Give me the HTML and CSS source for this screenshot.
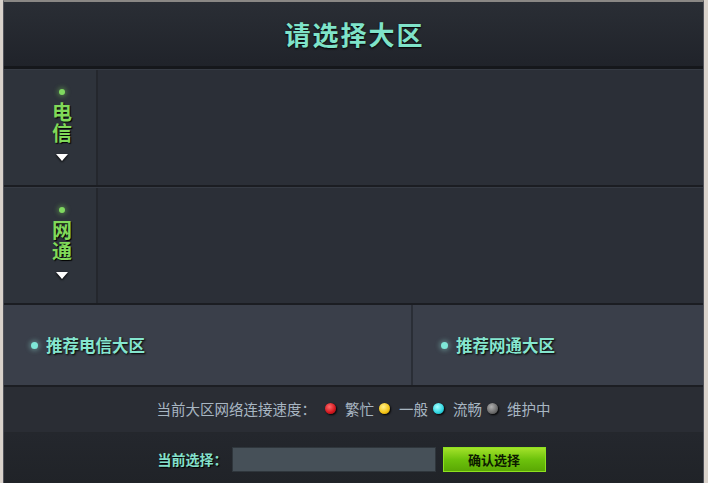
FILE: index.html
```html
<!DOCTYPE html>
<html lang="zh">
<head>
<meta charset="utf-8">
<link rel="stylesheet" href="styles.css">
</head>
<body>
<div class="panel">
  <header class="head"><h1 class="title">请选择大区</h1></header>
  <section class="isp">
    <div class="isp-side">
      <span class="gdot"></span>
      <span class="isp-name">电信</span>
      <span class="tri"></span>
    </div>
    <div class="isp-body"></div>
  </section>
  <section class="isp">
    <div class="isp-side">
      <span class="gdot"></span>
      <span class="isp-name">网通</span>
      <span class="tri"></span>
    </div>
    <div class="isp-body"></div>
  </section>
  <section class="rec">
    <div class="rec-item left"><span class="tdot"></span>推荐电信大区</div>
    <div class="rec-item right"><span class="tdot"></span>推荐网通大区</div>
  </section>
  <section class="legend">
    <span>当前大区网络连接速度：</span>
    <span class="ball red"></span><span>繁忙</span>
    <span class="ball yellow"></span><span>一般</span>
    <span class="ball cyan"></span><span>流畅</span>
    <span class="ball grey"></span><span>维护中</span>
  </section>
  <section class="choose">
    <span class="choose-label">当前选择：</span>
    <span class="choose-input"></span>
    <span class="choose-btn">确认选择</span>
  </section>
</div>
</body>
</html>
```
FILE: styles.css
```css
* { box-sizing: border-box; margin: 0; padding: 0; }
html, body { width: 708px; height: 483px; overflow: hidden; }
body {
  background: #d9d2cb;
  font-family: "Noto Sans CJK SC", "Liberation Sans", sans-serif;
}
.panel {
  margin-left: 3px;
  width: 701px;
  height: 483px;
  border-top: 2px solid #8a8885;
  border-left: 1px solid #50525a;
  border-right: 1px solid #50525a;
  background: #2b2f37;
  display: flex;
  flex-direction: column;
}
.head {
  height: 67px;
  flex: none;
  background: linear-gradient(#2a2e35, #20232a);
  border-bottom: 3px solid #15171b;
  display: flex;
  align-items: center;
  justify-content: center;
}
.title {
  font-size: 26px;
  font-weight: bold;
  letter-spacing: 2px;
  color: #7fe3c9;
  text-shadow: 0 1px 2px #000;
  padding-left: 2px;
  padding-bottom: 2px;
}
.isp {
  height: 118px;
  flex: none;
  display: flex;
  border-bottom: 2px solid #1b1d22;
  border-top: 1px solid #363b44;
}
.isp-side {
  width: 94px;
  background: #2e333b;
  border-right: 2px solid #24272d;
  display: flex;
  flex-direction: column;
  align-items: center;
  padding-left: 24px;
  padding-top: 19px;
}
.isp-body { flex: 1; background: #2b2f37; }
.gdot {
  width: 6px; height: 6px; border-radius: 50%;
  background: #7fd860;
  box-shadow: 0 0 4px 2px rgba(120,200,90,0.35);
  margin-bottom: 7px;
}
.isp-name {
  writing-mode: vertical-rl;
  font-size: 20px;
  font-weight: bold;
  line-height: 21px;
  letter-spacing: 1px;
  color: #80d95a;
  text-shadow: 1px 1px 1px #000;
}
.tri {
  margin-top: 10px;
  width: 0; height: 0;
  border-left: 6px solid transparent;
  border-right: 6px solid transparent;
  border-top: 7px solid #fff;
  filter: drop-shadow(0 1px 1px #000);
}
.rec {
  height: 82px;
  flex: none;
  display: flex;
  background: #3a3f4a;
  border-bottom: 2px solid #1c1e23;
}
.rec-item {
  display: flex;
  align-items: center;
  font-size: 16.5px;
  font-weight: bold;
  color: #85e6cf;
  text-shadow: 1px 1px 2px #000;
}
.rec-item.left {
  width: 409px;
  border-right: 2px solid #2a2e36;
  padding-left: 27px;
}
.rec-item.right { flex: 1; padding-left: 28px; }
.tdot {
  width: 7px; height: 7px; border-radius: 50%;
  background: #7fe8d8;
  box-shadow: 0 0 4px 2px rgba(140,220,210,0.35);
  margin-right: 8px;
}
.legend {
  height: 46px;
  flex: none;
  background: #2a2d34;
  display: flex;
  align-items: center;
  justify-content: center;
  font-size: 14.5px;
  color: #a8b6c2;
  border-bottom: 1px solid #24272c;
  padding-bottom: 2px;
}
.ball {
  width: 11px; height: 11px; border-radius: 50%;
  margin: 0 9px 0 5px;
  box-shadow: 1px 1px 2px #000;
}
.ball.red { background: radial-gradient(circle at 40% 35%, #ff6a6a, #d2161d 60%, #8a0b0f); margin-left: 9px; }
.ball.yellow { background: radial-gradient(circle at 40% 35%, #fff08a, #f4c315 60%, #a27a06); }
.ball.cyan { background: radial-gradient(circle at 40% 35%, #a8ffff, #2ed6e2 60%, #127c86); }
.ball.grey { background: radial-gradient(circle at 40% 35%, #b0b0b0, #6c6c6c 60%, #3c3c3c); }
.choose {
  flex: 1;
  background: linear-gradient(#24272d, #202328);
  display: flex;
  align-items: center;
  justify-content: center;
  padding-right: 4px;
  padding-top: 2px;
}
.choose-label {
  font-size: 14px;
  font-weight: bold;
  color: #84e0cb;
  text-shadow: 1px 1px 1px #000;
  margin-right: 4px;
}
.choose-input {
  width: 204px;
  height: 25px;
  background: #465058;
  border: 1px solid #2f363c;
  margin-right: 7px;
}
.choose-btn {
  width: 103px;
  height: 25px;
  background: linear-gradient(#a3e22a, #6dc20c 50%, #5aa804);
  border: 1px solid #8de11f;
  color: #0d1a00;
  font-size: 13px;
  font-weight: bold;
  display: flex;
  align-items: center;
  justify-content: center;
}
```
